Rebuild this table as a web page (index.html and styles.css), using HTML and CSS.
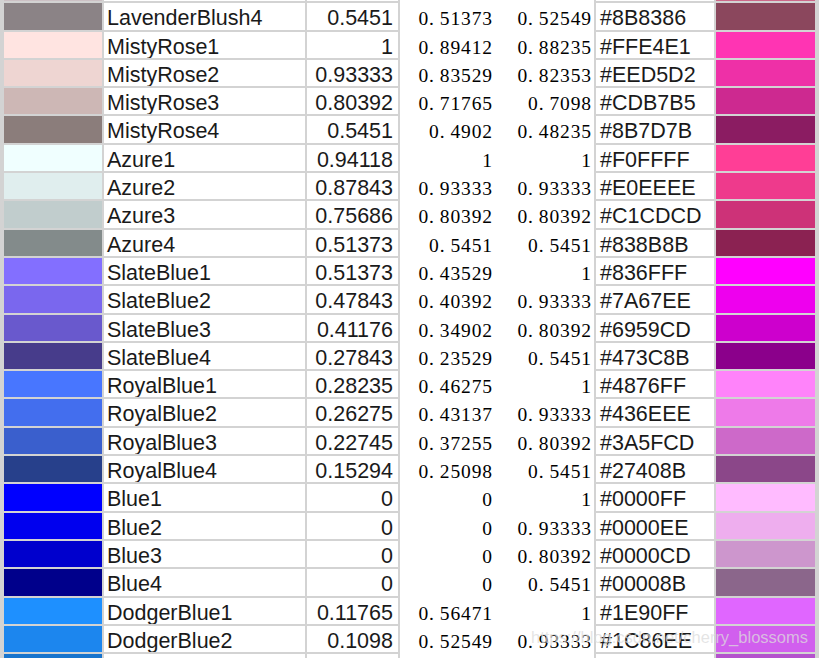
FILE: index.html
```html
<!DOCTYPE html>
<html>
<head>
<meta charset="utf-8">
<link rel="stylesheet" href="styles.css">
</head>
<body>
<div class="sheet">
  <div class="row"><div class="sw1" style="background:#CDC1C5"></div><div class="name">LavenderBlush3</div><div class="r">0.80392</div><div class="g">0<span class="d">.</span>75686</div><div class="b">0<span class="d">.</span>77255</div><div class="hex">#CDC1C5</div><div class="sw2" style="background:#CD6889"></div></div>
  <div class="row"><div class="sw1" style="background:#8B8386"></div><div class="name">LavenderBlush4</div><div class="r">0.5451</div><div class="g">0<span class="d">.</span>51373</div><div class="b">0<span class="d">.</span>52549</div><div class="hex">#8B8386</div><div class="sw2" style="background:#8B475D"></div></div>
  <div class="row"><div class="sw1" style="background:#FFE4E1"></div><div class="name">MistyRose1</div><div class="r">1</div><div class="g">0<span class="d">.</span>89412</div><div class="b">0<span class="d">.</span>88235</div><div class="hex">#FFE4E1</div><div class="sw2" style="background:#FF34B3"></div></div>
  <div class="row"><div class="sw1" style="background:#EED5D2"></div><div class="name">MistyRose2</div><div class="r">0.93333</div><div class="g">0<span class="d">.</span>83529</div><div class="b">0<span class="d">.</span>82353</div><div class="hex">#EED5D2</div><div class="sw2" style="background:#EE30A7"></div></div>
  <div class="row"><div class="sw1" style="background:#CDB7B5"></div><div class="name">MistyRose3</div><div class="r">0.80392</div><div class="g">0<span class="d">.</span>71765</div><div class="b">0<span class="d">.</span>7098</div><div class="hex">#CDB7B5</div><div class="sw2" style="background:#CD2990"></div></div>
  <div class="row"><div class="sw1" style="background:#8B7D7B"></div><div class="name">MistyRose4</div><div class="r">0.5451</div><div class="g">0<span class="d">.</span>4902</div><div class="b">0<span class="d">.</span>48235</div><div class="hex">#8B7D7B</div><div class="sw2" style="background:#8B1C62"></div></div>
  <div class="row"><div class="sw1" style="background:#F0FFFF"></div><div class="name">Azure1</div><div class="r">0.94118</div><div class="g">1</div><div class="b">1</div><div class="hex">#F0FFFF</div><div class="sw2" style="background:#FF3E96"></div></div>
  <div class="row"><div class="sw1" style="background:#E0EEEE"></div><div class="name">Azure2</div><div class="r">0.87843</div><div class="g">0<span class="d">.</span>93333</div><div class="b">0<span class="d">.</span>93333</div><div class="hex">#E0EEEE</div><div class="sw2" style="background:#EE3A8C"></div></div>
  <div class="row"><div class="sw1" style="background:#C1CDCD"></div><div class="name">Azure3</div><div class="r">0.75686</div><div class="g">0<span class="d">.</span>80392</div><div class="b">0<span class="d">.</span>80392</div><div class="hex">#C1CDCD</div><div class="sw2" style="background:#CD3278"></div></div>
  <div class="row"><div class="sw1" style="background:#838B8B"></div><div class="name">Azure4</div><div class="r">0.51373</div><div class="g">0<span class="d">.</span>5451</div><div class="b">0<span class="d">.</span>5451</div><div class="hex">#838B8B</div><div class="sw2" style="background:#8B2252"></div></div>
  <div class="row"><div class="sw1" style="background:#836FFF"></div><div class="name">SlateBlue1</div><div class="r">0.51373</div><div class="g">0<span class="d">.</span>43529</div><div class="b">1</div><div class="hex">#836FFF</div><div class="sw2" style="background:#FF00FF"></div></div>
  <div class="row"><div class="sw1" style="background:#7A67EE"></div><div class="name">SlateBlue2</div><div class="r">0.47843</div><div class="g">0<span class="d">.</span>40392</div><div class="b">0<span class="d">.</span>93333</div><div class="hex">#7A67EE</div><div class="sw2" style="background:#EE00EE"></div></div>
  <div class="row"><div class="sw1" style="background:#6959CD"></div><div class="name">SlateBlue3</div><div class="r">0.41176</div><div class="g">0<span class="d">.</span>34902</div><div class="b">0<span class="d">.</span>80392</div><div class="hex">#6959CD</div><div class="sw2" style="background:#CD00CD"></div></div>
  <div class="row"><div class="sw1" style="background:#473C8B"></div><div class="name">SlateBlue4</div><div class="r">0.27843</div><div class="g">0<span class="d">.</span>23529</div><div class="b">0<span class="d">.</span>5451</div><div class="hex">#473C8B</div><div class="sw2" style="background:#8B008B"></div></div>
  <div class="row"><div class="sw1" style="background:#4876FF"></div><div class="name">RoyalBlue1</div><div class="r">0.28235</div><div class="g">0<span class="d">.</span>46275</div><div class="b">1</div><div class="hex">#4876FF</div><div class="sw2" style="background:#FF83FA"></div></div>
  <div class="row"><div class="sw1" style="background:#436EEE"></div><div class="name">RoyalBlue2</div><div class="r">0.26275</div><div class="g">0<span class="d">.</span>43137</div><div class="b">0<span class="d">.</span>93333</div><div class="hex">#436EEE</div><div class="sw2" style="background:#EE7AE9"></div></div>
  <div class="row"><div class="sw1" style="background:#3A5FCD"></div><div class="name">RoyalBlue3</div><div class="r">0.22745</div><div class="g">0<span class="d">.</span>37255</div><div class="b">0<span class="d">.</span>80392</div><div class="hex">#3A5FCD</div><div class="sw2" style="background:#CD69C9"></div></div>
  <div class="row"><div class="sw1" style="background:#27408B"></div><div class="name">RoyalBlue4</div><div class="r">0.15294</div><div class="g">0<span class="d">.</span>25098</div><div class="b">0<span class="d">.</span>5451</div><div class="hex">#27408B</div><div class="sw2" style="background:#8B4789"></div></div>
  <div class="row"><div class="sw1" style="background:#0000FF"></div><div class="name">Blue1</div><div class="r">0</div><div class="g">0</div><div class="b">1</div><div class="hex">#0000FF</div><div class="sw2" style="background:#FFBBFF"></div></div>
  <div class="row"><div class="sw1" style="background:#0000EE"></div><div class="name">Blue2</div><div class="r">0</div><div class="g">0</div><div class="b">0<span class="d">.</span>93333</div><div class="hex">#0000EE</div><div class="sw2" style="background:#EEAEEE"></div></div>
  <div class="row"><div class="sw1" style="background:#0000CD"></div><div class="name">Blue3</div><div class="r">0</div><div class="g">0</div><div class="b">0<span class="d">.</span>80392</div><div class="hex">#0000CD</div><div class="sw2" style="background:#CD96CD"></div></div>
  <div class="row"><div class="sw1" style="background:#00008B"></div><div class="name">Blue4</div><div class="r">0</div><div class="g">0</div><div class="b">0<span class="d">.</span>5451</div><div class="hex">#00008B</div><div class="sw2" style="background:#8B668B"></div></div>
  <div class="row"><div class="sw1" style="background:#1E90FF"></div><div class="name">DodgerBlue1</div><div class="r">0.11765</div><div class="g">0<span class="d">.</span>56471</div><div class="b">1</div><div class="hex">#1E90FF</div><div class="sw2" style="background:#E066FF"></div></div>
  <div class="row"><div class="sw1" style="background:#1C86EE"></div><div class="name">DodgerBlue2</div><div class="r">0.1098</div><div class="g">0<span class="d">.</span>52549</div><div class="b">0<span class="d">.</span>93333</div><div class="hex">#1C86EE</div><div class="sw2" style="background:#D15FEE"></div></div>
  <div class="row"><div class="sw1" style="background:#1874CD"></div><div class="name">DodgerBlue3</div><div class="r">0.094118</div><div class="g">0<span class="d">.</span>4549</div><div class="b">0<span class="d">.</span>80392</div><div class="hex">#1874CD</div><div class="sw2" style="background:#B452CD"></div></div>
</div>
<div class="watermark">https://blog.csdn.net/cherry_blossoms</div>
</body>
</html>
```
FILE: styles.css
```css
html, body {
  margin: 0;
  padding: 0;
  background: #ffffff;
  overflow: hidden;
}
body {
  width: 819px;
  height: 658px;
  position: relative;
}
.sheet {
  margin-top: -25px;
  width: 819px;
}
.row {
  display: flex;
  height: 28.3px;
}
.row > div {
  box-sizing: border-box;
  height: 100%;
  overflow: hidden;
  white-space: nowrap;
}
.sw1, .name, .r, .hex, .sw2 {
  border-bottom: 2px solid #d3d3d3;
  font-family: "Liberation Sans", Arial, sans-serif;
  font-size: 21.5px;
  line-height: 24px;
  padding-top: 3px;
  color: #1a1a1a;
}
.sw1 {
  width: 104px;
  border-left: 4px solid #d3d3d3;
  border-right: 2px solid #d3d3d3;
}
.name {
  width: 203px;
  border-right: 2px solid #d3d3d3;
  padding-left: 3px;
}
.r {
  width: 93px;
  border-right: 2px solid #d3d3d3;
  text-align: right;
  padding-right: 5px;
}
.g, .b {
  width: 97px;
  font-family: "Liberation Serif", "Times New Roman", serif;
  font-size: 19.5px;
  letter-spacing: 0.9px;
  line-height: 24px;
  padding-top: 4px;
  text-align: right;
  color: #000;
}
.g { padding-right: 4px; }
.b { padding-right: 2px; }
.d { letter-spacing: 5.8px; }
.hex {
  width: 122px;
  border-left: 2px solid #d3d3d3;
  border-right: 2px solid #d3d3d3;
  padding-left: 4px;
}
.sw2 {
  width: 103px;
  border-right: 4px solid #d3d3d3;
}
.watermark {
  position: absolute;
  right: 11px;
  top: 628px;
  font-family: "Liberation Sans", Arial, sans-serif;
  font-size: 16.5px;
  color: rgba(220, 220, 220, 0.75);
  white-space: nowrap;
}
```
